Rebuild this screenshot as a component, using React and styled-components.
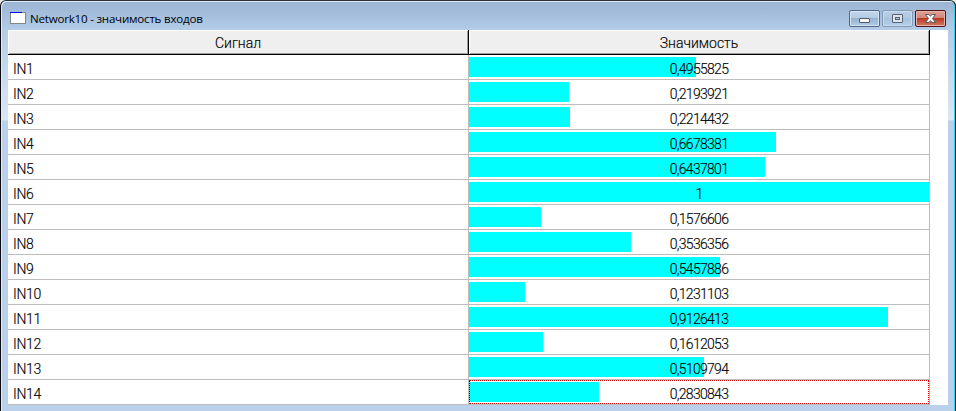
import React from 'react';
import styled, { createGlobalStyle } from 'styled-components';

const rows = [
  ['IN1', '0,4955825'], ['IN2', '0,2193921'], ['IN3', '0,2214432'], ['IN4', '0,6678381'],
  ['IN5', '0,6437801'], ['IN6', '1'], ['IN7', '0,1576606'], ['IN8', '0,3536356'],
  ['IN9', '0,5457886'], ['IN10', '0,1231103'], ['IN11', '0,9126413'], ['IN12', '0,1612053'],
  ['IN13', '0,5109794'], ['IN14', '0,2830843'],
];

const Global = createGlobalStyle`
  * { box-sizing: border-box; }
  body { margin: 0; background: #e8ecec; overflow: hidden; }
`;

const Frame = styled.main`
  width: 956px;
  height: 411px;
  display: flex;
  flex-direction: column;
  padding: 0 6px;
  border: solid #0a0a10;
  border-width: 1px 1px 0 1px;
  border-top-color: #2a3038;
  border-radius: 6px 6px 0 0;
  background: linear-gradient(#9ab4d2 0, #a3bddb 12px, #b3cde8 29px, #bdd3eb 50px, #dae7f5 119px, #b9d1ea 120px);
  box-shadow: inset 1px 1px 0 #dfeaf5, inset -1px 0 0 #2bd4f0;
`;

const TitleBar = styled.header`
  height: 29px;
  flex: none;
  display: flex;
  align-items: flex-start;
  padding: 9px 3px 0;
`;

const WindowIcon = styled.svg`
  width: 16px;
  height: 12px;
  margin-top: 2px;
  flex: none;
`;

const Title = styled.h1`
  margin: 0 auto 0 4px;
  font: 11.6px/17px "Open Sans", "Noto Sans", sans-serif;
  letter-spacing: -0.23px;
  color: #000;
  white-space: nowrap;
`;

const Controls = styled.div`
  display: flex;
  gap: 2px;
`;

const tones = {
  normal: { edge: '#52698a', fill: 'linear-gradient(#c3d7ec 0, #b4cbe3 45%, #98b3d0 50%, #b2cce6 100%)', glow: '#d5e4f3' },
  faded: { edge: '#8499b4', fill: 'linear-gradient(#b7cee7 0, #b0c9e3 45%, #a6c1dd 50%, #b7d0ea 100%)', glow: '#c8dbf0' },
  close: { edge: '#50121b', fill: 'linear-gradient(#dfa297 0, #d2877a 45%, #b93a25 50%, #d27860 100%)', glow: '#e7b3a9' },
};

const ControlButton = styled.button`
  width: 31px;
  height: 17px;
  padding: 0;
  display: grid;
  place-items: center;
  border: 1px solid ${(p) => tones[p.$tone].edge};
  border-radius: 2px;
  background: ${(p) => tones[p.$tone].fill};
  box-shadow: inset 0 0 0 1px ${(p) => tones[p.$tone].glow};
`;

const Glyph = styled.svg`
  width: 13px;
  height: 11px;
  display: block;
`;

const Client = styled.section`
  width: 940px;
  height: 375px;
  margin-left: 1px;
  background: #fff;
`;

const Table = styled.div`
  width: 922px;
  font: 300 14px/24px Roboto, "Liberation Sans", sans-serif;
  color: #000;
  -webkit-text-stroke: 0.15px #000;
`;

const Row = styled.div`
  display: grid;
  grid-template-columns: 461px 461px;
  grid-template-rows: 25px;
`;

const HeadCell = styled.div`
  border: solid #000;
  border-width: 0 1px 1px 0;
  background: #efefef;
  box-shadow: inset 1px 1px #fff, inset -1px -1px #a0a0a0;
  padding-top: 1px;
  text-align: center;
`;

const Cell = styled.div`
  min-width: 0;
  border: solid #bdbdbd;
  border-width: 0 1px 1px 0;
  padding: 2px 0 0 5px;
  letter-spacing: -0.3px;
  overflow: hidden;
`;

const ValueCell = styled(Cell)`
  display: grid;
  grid-template-rows: 24px;
  padding: 0;
  > * { grid-area: 1 / 1; }
`;

const Bar = styled.div`
  height: 20px;
  margin-top: 2px;
  background: #0ff;
`;

const Value = styled.span`
  padding-top: 2px;
  text-align: center;
  letter-spacing: -0.7px;
`;

const FocusOutline = styled.div`
  border: 1px dotted #d40000;
  border-left-color: #000;
`;

export default function App() {
  return (
    <>
      <Global />
      <Frame>
        <TitleBar>
          <WindowIcon viewBox="0 0 16 12" shapeRendering="crispEdges">
            <rect width="16" height="12" fill="#858585" />
            <rect x="1" y="1" width="14" height="10" fill="#fff" />
            <rect width="12" height="1" fill="#0000ff" />
          </WindowIcon>
          <Title>Network10 - значимость входов</Title>
          <Controls>
            <ControlButton $tone="normal" aria-label="Свернуть">
              <Glyph viewBox="0 0 13 11">
                <rect x="1.5" y="5.5" width="10" height="4" rx="0.5" fill="#f7f7f7" stroke="#525866" />
              </Glyph>
            </ControlButton>
            <ControlButton $tone="faded" aria-label="Развернуть">
              <Glyph viewBox="0 0 13 11">
                <rect x="1.5" y="1.5" width="10" height="8" rx="0.5" fill="#dce4ed" stroke="#59606f" />
                <rect x="4.5" y="4.5" width="4" height="2" fill="#abc3dc" stroke="#59606f" />
              </Glyph>
            </ControlButton>
            <ControlButton $tone="close" aria-label="Закрыть">
              <Glyph viewBox="0 0 13 11">
                <path d="M1.5 1.5H5L6.5 3.3L8 1.5H11.5L8.5 5.5L11.5 9.5H8L6.5 7.7L5 9.5H1.5L4.5 5.5Z" fill="#fafafa" stroke="#565864" strokeLinejoin="round" />
              </Glyph>
            </ControlButton>
          </Controls>
        </TitleBar>
        <Client>
          <Table>
            <Row>
              <HeadCell>Сигнал</HeadCell>
              <HeadCell>Значимость</HeadCell>
            </Row>
            {rows.map(([name, value], i) => (
              <Row key={name}>
                <Cell>{name}</Cell>
                <ValueCell>
                  <Bar style={{ width: Math.floor(460 * parseFloat(value.replace(',', '.'))) }} />
                  <Value>{value}</Value>
                  {i === rows.length - 1 && <FocusOutline />}
                </ValueCell>
              </Row>
            ))}
          </Table>
        </Client>
      </Frame>
    </>
  );
}
